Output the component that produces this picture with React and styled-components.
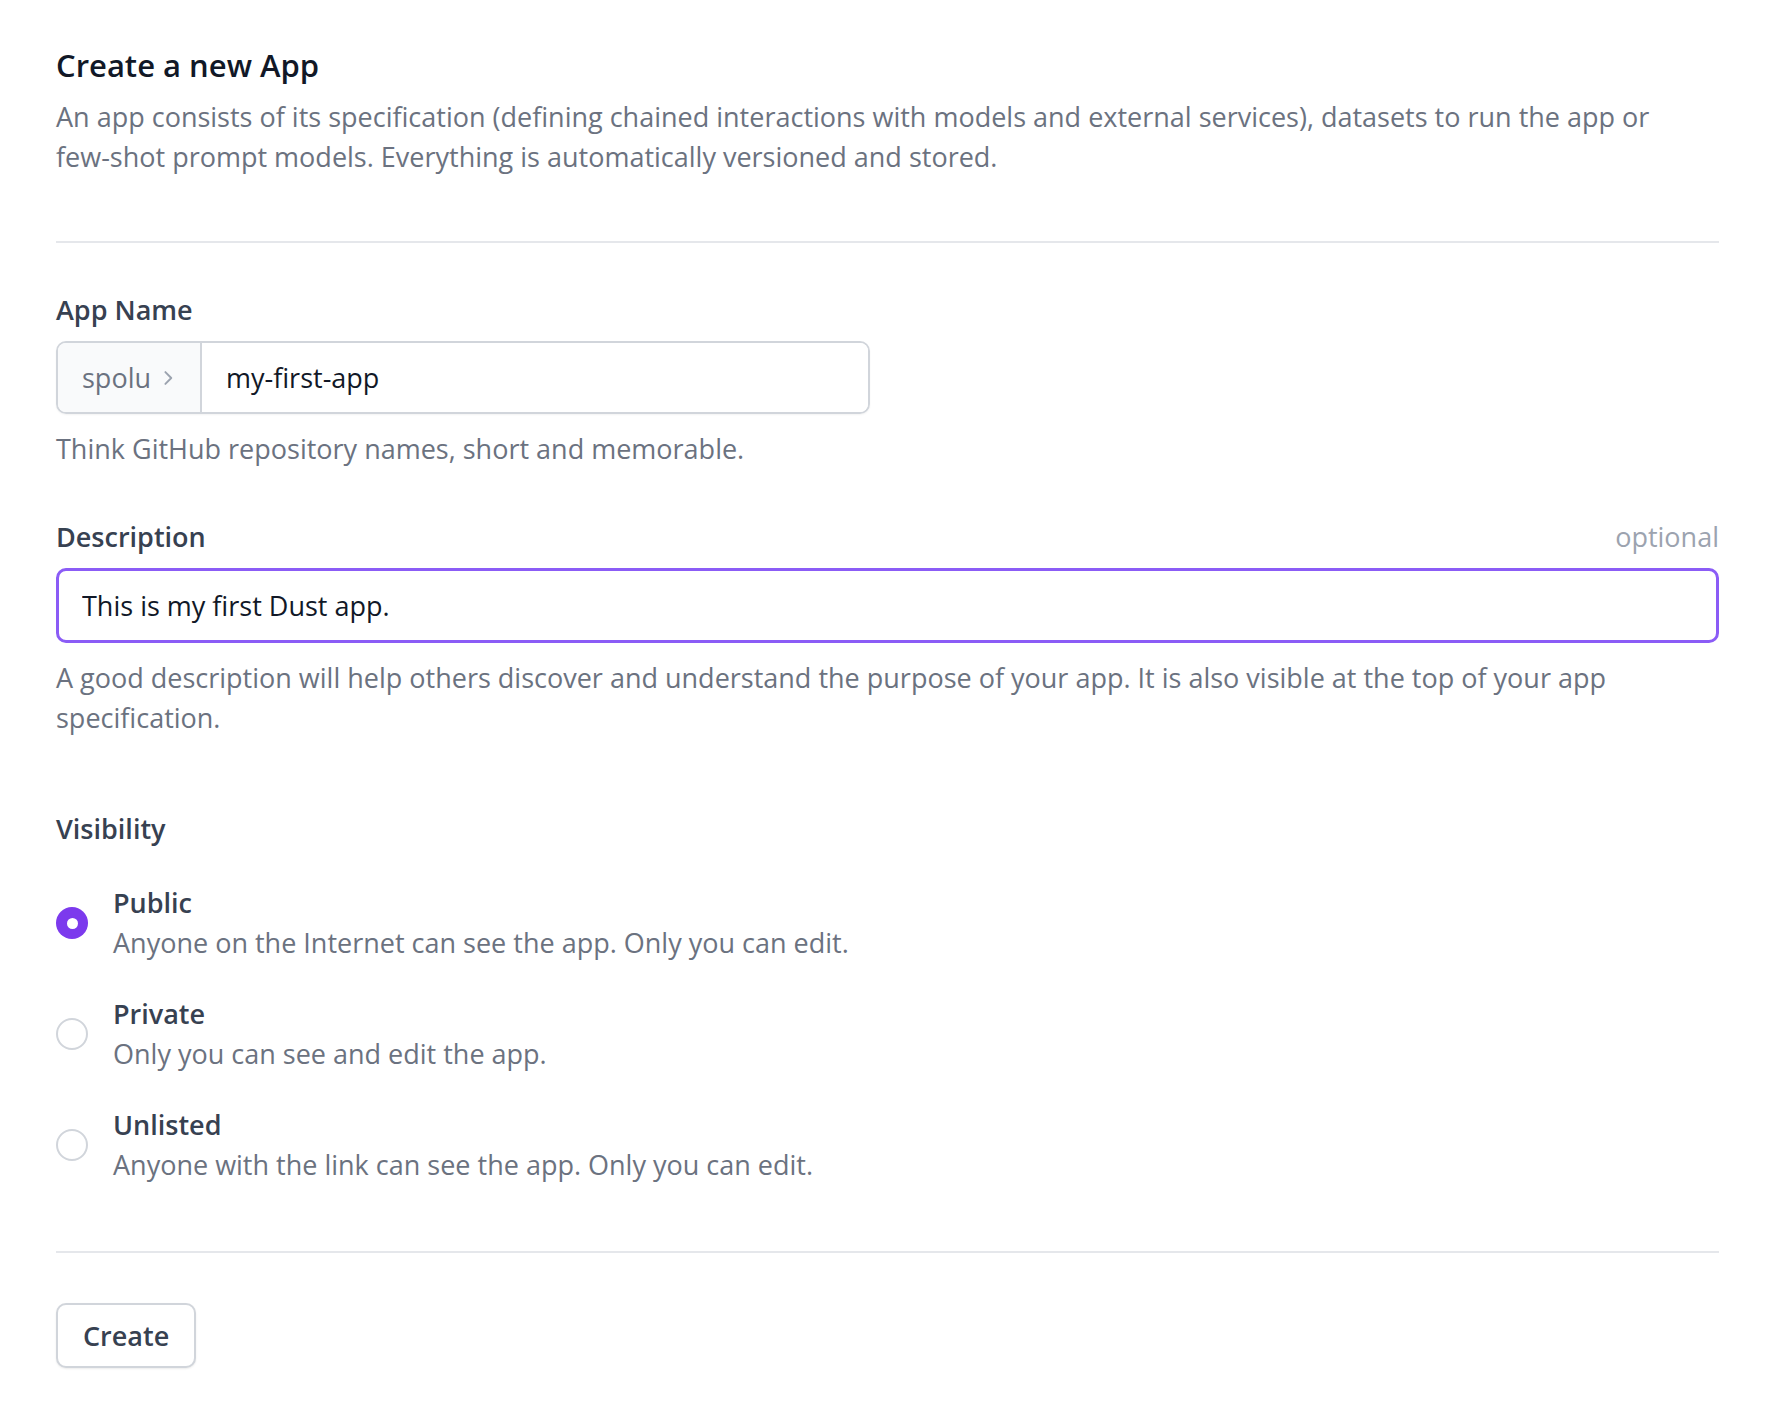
import React from "react";
import styled, { createGlobalStyle } from "styled-components";

const GlobalStyle = createGlobalStyle`
  body {
    margin: 0;
    background: #ffffff;
    font-family: "Open Sans", "Noto Sans", sans-serif;
  }
`;

const options = [
  {
    id: "public",
    label: "Public",
    text: "Anyone on the Internet can see the app. Only you can edit.",
  },
  { id: "private", label: "Private", text: "Only you can see and edit the app." },
  {
    id: "unlisted",
    label: "Unlisted",
    text: "Anyone with the link can see the app. Only you can edit.",
  },
];

function ChevronRight() {
  return (
    <svg width="26" height="26" viewBox="0 0 20 20" fill="none">
      <path
        d="M8 5.5l4.5 4.5L8 14.5"
        stroke="currentColor"
        strokeWidth="1.5"
        strokeLinecap="round"
        strokeLinejoin="round"
      />
    </svg>
  );
}

export default function App() {
  return (
    <>
      <GlobalStyle />
      <Page>
        <Header>
          <Title>Create a new App</Title>
          <Intro>
            An app consists of its specification (defining chained interactions
            with models and external services), datasets to run the app or{" "}
            <NoWrap>few-shot</NoWrap> prompt models. Everything is automatically
            versioned and stored.
          </Intro>
        </Header>
        <Divider />
        <Field>
          <LabelRow>
            <Label>App Name</Label>
          </LabelRow>
          <PrefixInput>
            <Prefix>
              spolu
              <Chevron>
                <ChevronRight />
              </Chevron>
            </Prefix>
            <BareInput defaultValue="my-first-app" />
          </PrefixInput>
          <Hint>Think GitHub repository names, short and memorable.</Hint>
        </Field>
        <Field $top={48}>
          <LabelRow>
            <Label>Description</Label>
            <Optional>optional</Optional>
          </LabelRow>
          <TextInput defaultValue="This is my first Dust app." />
          <Hint>
            A good description will help others discover and understand the
            purpose of your app. It is also visible at the top of your app
            specification.
          </Hint>
        </Field>
        <Visibility>
          <Label>Visibility</Label>
          <Options>
            {options.map((o) => (
              <Option key={o.id}>
                <Radio $checked={o.id === "public"} />
                <OptionText>
                  <OptionLabel>{o.label}</OptionLabel>
                  <OptionDesc>{o.text}</OptionDesc>
                </OptionText>
              </Option>
            ))}
          </Options>
        </Visibility>
        <Divider $top={66} />
        <Actions>
          <Button>Create</Button>
        </Actions>
      </Page>
    </>
  );
}

const Page = styled.div`
  width: 1663px;
  margin-left: 56px;
  padding-top: 42px;
  padding-bottom: 40px;
`;

const Header = styled.div`
  display: flex;
  flex-direction: column;
  gap: 9px;
`;

const Title = styled.h1`
  margin: 0;
  font-size: 31px;
  line-height: 46px;
  font-weight: 600;
  color: #111827;
`;

const Intro = styled.p`
  margin: 0;
  font-size: 27px;
  line-height: 40px;
  color: #6b7280;
`;

const NoWrap = styled.span`
  white-space: nowrap;
`;

const Divider = styled.hr`
  margin: ${(p) => p.$top || 64}px 0 0;
  border: none;
  border-top: 2px solid #e5e7eb;
`;

const Field = styled.div`
  margin-top: ${(p) => p.$top || 47}px;
  display: flex;
  flex-direction: column;
`;

const LabelRow = styled.div`
  display: flex;
  justify-content: space-between;
  align-items: center;
  margin-bottom: 11px;
`;

const Label = styled.label`
  font-size: 27px;
  line-height: 40px;
  font-weight: 600;
  color: #374151;
`;

const Optional = styled.span`
  font-size: 27px;
  line-height: 40px;
  color: #9ca3af;
`;

const PrefixInput = styled.div`
  display: flex;
  width: 814px;
  height: 73px;
  box-sizing: border-box;
  border: 2px solid #d1d5db;
  border-radius: 10px;
  overflow: hidden;
  box-shadow: 0 1px 2px rgba(0, 0, 0, 0.05);
`;

const Prefix = styled.span`
  display: flex;
  align-items: center;
  gap: 4px;
  width: 144px;
  box-sizing: border-box;
  padding-left: 24px;
  background: #f9fafb;
  border-right: 2px solid #d1d5db;
  font-size: 27px;
  color: #6b7280;
`;

const Chevron = styled.span`
  display: flex;
  color: #9ca3af;
`;

const BareInput = styled.input`
  flex: 1;
  border: none;
  outline: none;
  padding: 0 24px;
  font-family: inherit;
  font-size: 27px;
  color: #111827;
  background: #ffffff;
`;

const TextInput = styled.input`
  width: 100%;
  height: 75px;
  box-sizing: border-box;
  border: 3px solid #8b5cf6;
  border-radius: 10px;
  outline: none;
  padding: 0 23px;
  font-family: inherit;
  font-size: 27px;
  color: #111827;
`;

const Hint = styled.p`
  margin: 15px 0 0;
  font-size: 27px;
  line-height: 40px;
  color: #6b7280;
`;

const Visibility = styled.div`
  margin-top: 71px;
  display: flex;
  flex-direction: column;
`;

const Options = styled.div`
  margin-top: 34px;
  display: flex;
  flex-direction: column;
  gap: 31px;
`;

const Option = styled.div`
  display: flex;
  align-items: center;
  gap: 25px;
`;

const Radio = styled.span`
  width: 32px;
  height: 32px;
  box-sizing: border-box;
  border-radius: 50%;
  flex-shrink: 0;
  background: ${(p) => (p.$checked ? "#7c3aed" : "#ffffff")};
  border: ${(p) => (p.$checked ? "none" : "2px solid #d1d5db")};
  display: flex;
  align-items: center;
  justify-content: center;
  &::after {
    content: "";
    width: 11px;
    height: 11px;
    border-radius: 50%;
    background: #ffffff;
    display: ${(p) => (p.$checked ? "block" : "none")};
  }
`;

const OptionText = styled.div`
  display: flex;
  flex-direction: column;
`;

const OptionLabel = styled.span`
  font-size: 27px;
  line-height: 40px;
  font-weight: 600;
  color: #374151;
`;

const OptionDesc = styled.span`
  font-size: 27px;
  line-height: 40px;
  color: #6b7280;
`;

const Actions = styled.div`
  margin-top: 50px;
  display: flex;
`;

const Button = styled.button`
  height: 65px;
  padding: 0 25px;
  border: 2px solid #d1d5db;
  border-radius: 10px;
  background: #ffffff;
  font-family: inherit;
  font-size: 27px;
  font-weight: 600;
  color: #374151;
  box-shadow: 0 1px 2px rgba(0, 0, 0, 0.08);
  cursor: pointer;
`;
